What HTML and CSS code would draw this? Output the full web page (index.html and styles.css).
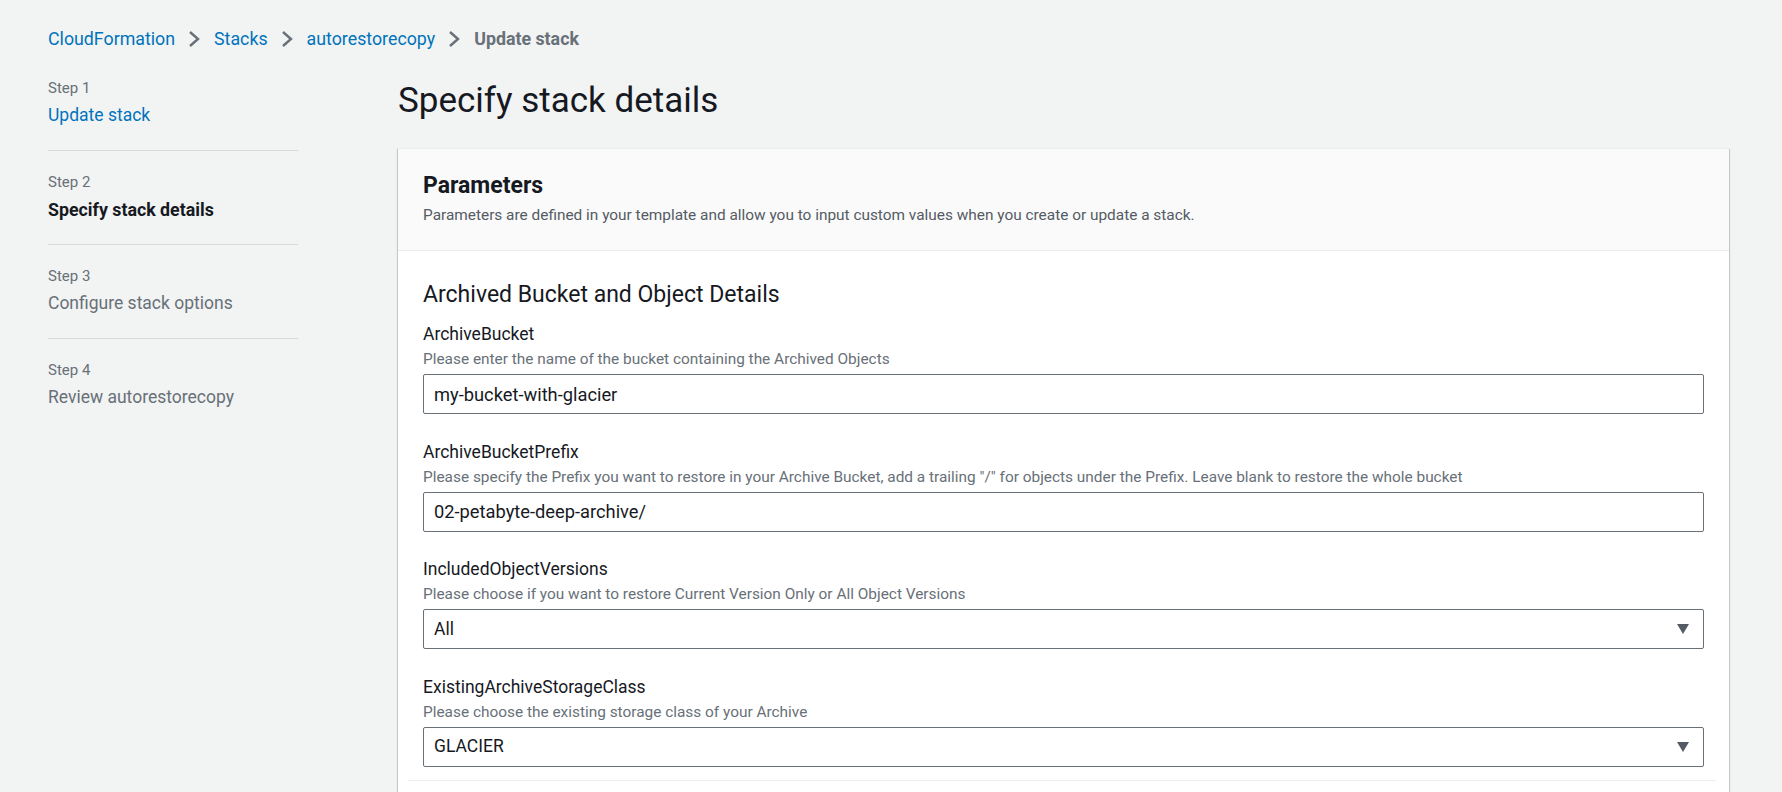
FILE: index.html
```html
<!DOCTYPE html>
<html lang="en">
<head>
<meta charset="utf-8">
<title>Specify stack details</title>
<link rel="stylesheet" href="styles.css">
</head>
<body>
<div class="page">
  <nav class="breadcrumbs">
    <a class="crumb" href="#">CloudFormation</a>
    <svg class="chev" viewBox="0 0 12 18" width="12" height="18"><polyline points="2,2 10,9 2,16" fill="none" stroke="#687078" stroke-width="2.4"/></svg>
    <a class="crumb" href="#">Stacks</a>
    <svg class="chev" viewBox="0 0 12 18" width="12" height="18"><polyline points="2,2 10,9 2,16" fill="none" stroke="#687078" stroke-width="2.4"/></svg>
    <a class="crumb" href="#">autorestorecopy</a>
    <svg class="chev" viewBox="0 0 12 18" width="12" height="18"><polyline points="2,2 10,9 2,16" fill="none" stroke="#687078" stroke-width="2.4"/></svg>
    <span class="crumb current">Update stack</span>
  </nav>

  <div class="layout">
    <ul class="steps">
      <li class="step">
        <div class="step-label">Step 1</div>
        <a class="step-title link" href="#">Update stack</a>
      </li>
      <li class="step">
        <div class="step-label">Step 2</div>
        <div class="step-title active">Specify stack details</div>
      </li>
      <li class="step">
        <div class="step-label">Step 3</div>
        <div class="step-title">Configure stack options</div>
      </li>
      <li class="step">
        <div class="step-label">Step 4</div>
        <div class="step-title">Review autorestorecopy</div>
      </li>
    </ul>

    <main class="main">
      <h1 class="page-title">Specify stack details</h1>
      <section class="card">
        <header class="card-header">
          <h2 class="card-title">Parameters</h2>
          <p class="card-desc">Parameters are defined in your template and allow you to input custom values when you create or update a stack.</p>
        </header>
        <div class="card-body">
          <h3 class="group-title">Archived Bucket and Object Details</h3>

          <div class="fields">
            <div class="field">
              <div class="field-label">ArchiveBucket</div>
              <div class="field-desc">Please enter the name of the bucket containing the Archived Objects</div>
              <input class="input" type="text" value="my-bucket-with-glacier">
            </div>

            <div class="field">
              <div class="field-label">ArchiveBucketPrefix</div>
              <div class="field-desc">Please specify the Prefix you want to restore in your Archive Bucket, add a trailing "/" for objects under the Prefix. Leave blank to restore the whole bucket</div>
              <input class="input" type="text" value="02-petabyte-deep-archive/">
            </div>

            <div class="field">
              <div class="field-label">IncludedObjectVersions</div>
              <div class="field-desc">Please choose if you want to restore Current Version Only or All Object Versions</div>
              <div class="select">
                <span class="select-value">All</span>
                <svg class="caret" viewBox="0 0 12 10" width="12" height="10"><polygon points="0,0 12,0 6,10" fill="#545b64"/></svg>
              </div>
            </div>

            <div class="field">
              <div class="field-label">ExistingArchiveStorageClass</div>
              <div class="field-desc">Please choose the existing storage class of your Archive</div>
              <div class="select">
                <span class="select-value">GLACIER</span>
                <svg class="caret" viewBox="0 0 12 10" width="12" height="10"><polygon points="0,0 12,0 6,10" fill="#545b64"/></svg>
              </div>
            </div>
          </div>

          <div class="divider"></div>
          <div class="more"></div>
        </div>
      </section>
    </main>
  </div>
</div>
</body>
</html>
```

FILE: styles.css
```css
* { box-sizing: border-box; }

html, body {
  margin: 0;
  padding: 0;
  background: #f2f3f3;
}

body {
  font-family: Roboto, "Liberation Sans", sans-serif;
  color: #16191f;
  font-size: 17.5px;
  line-height: 25px;
  overflow: hidden;
}

.page {
  padding: 26px 53px 0 48px;
}

.breadcrumbs {
  display: flex;
  align-items: center;
  height: 25px;
  margin-bottom: 27px;
}

.crumb {
  color: #0073bb;
  text-decoration: none;
  font-size: 17.8px;
  line-height: 25px;
}

.crumb.current {
  color: #687078;
  font-weight: 700;
}

.chev {
  display: block;
  margin: 0 14px 0 13px;
}

.layout {
  display: grid;
  grid-template-columns: 250px 1fr;
  column-gap: 100px;
}

.steps {
  list-style: none;
  margin: 0;
  padding: 0;
}

.step {
  padding: 21px 0 22px;
  border-bottom: 1px solid #d5dbdb;
}

.step:first-child {
  padding-top: 0;
}

.step:last-child {
  border-bottom: none;
}

.step-label {
  font-size: 15px;
  line-height: 20px;
  color: #687078;
}

.step-title {
  display: block;
  margin-top: 5px;
  font-size: 17.5px;
  line-height: 25px;
  color: #687078;
  text-decoration: none;
}

.step-title.link {
  color: #0073bb;
}

.step-title.active {
  color: #16191f;
  font-weight: 700;
  font-size: 17.8px;
}

.main {
  min-width: 0;
}

.page-title {
  margin: 1px 0 25px;
  font-size: 35px;
  line-height: 44px;
  font-weight: 400;
  color: #16191f;
}

.card {
  background: #ffffff;
  border-top: 1px solid #eaeded;
  box-shadow: 0 1px 1px 0 rgba(0, 28, 36, 0.3), 1px 1px 1px 0 rgba(0, 28, 36, 0.15), -1px 1px 1px 0 rgba(0, 28, 36, 0.15);
}

.card-header {
  background: #fafafa;
  border-bottom: 1px solid #eaeded;
  padding: 23px 25px 25px;
}

.card-title {
  margin: 0;
  font-size: 23px;
  line-height: 28px;
  font-weight: 700;
  color: #16191f;
}

.card-desc {
  margin: 5px 0 0;
  font-size: 15.4px;
  line-height: 20px;
  color: #545b64;
}

.card-body {
  padding: 29px 25px 0;
}

.group-title {
  margin: 0 0 12px;
  font-size: 23px;
  line-height: 30px;
  font-weight: 400;
  color: #16191f;
}

.fields {
  display: flex;
  flex-direction: column;
  gap: 25.5px;
}

.field-label {
  font-size: 17.5px;
  line-height: 25px;
  color: #16191f;
}

.field-desc {
  margin-top: 2px;
  font-size: 15.4px;
  line-height: 20px;
  color: #687078;
}

.input,
.select {
  display: flex;
  align-items: center;
  width: 100%;
  height: 40px;
  margin-top: 5px;
  padding: 0 10px;
  border: 1px solid #687078;
  border-radius: 2px;
  background: #ffffff;
  font-family: Roboto, "Liberation Sans", sans-serif;
  font-size: 18.3px;
  color: #16191f;
  outline: none;
}

.select {
  justify-content: space-between;
  padding-right: 14px;
  font-size: 17.5px;
}

.select-value {
  line-height: 25px;
}

.caret {
  display: block;
}

.divider {
  margin: 13px -12px 0 -15px;
  border-top: 1px solid #eaeded;
}

.more {
  height: 40px;
}
```
